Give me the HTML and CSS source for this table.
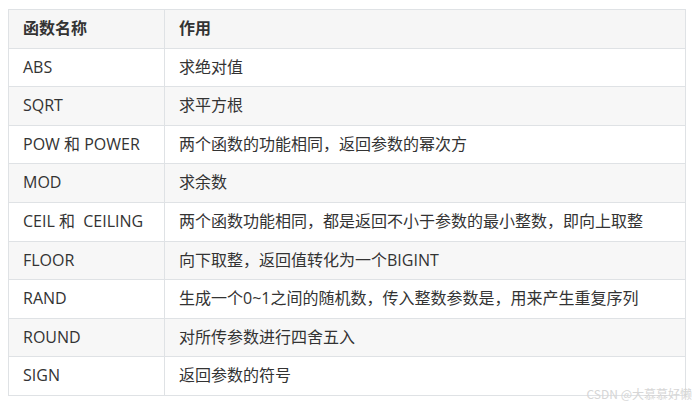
FILE: index.html
```html
<!DOCTYPE html>
<html lang="zh">
<head>
<meta charset="utf-8">
<link rel="stylesheet" href="styles.css">
</head>
<body>
<div class="wrap">
<table class="fn-table">
  <thead>
    <tr><th class="c1">函数名称</th><th>作用</th></tr>
  </thead>
  <tbody>
    <tr><td>ABS</td><td>求绝对值</td></tr>
    <tr><td>SQRT</td><td>求平方根</td></tr>
    <tr><td>POW 和 POWER</td><td>两个函数的功能相同，返回参数的幂次方</td></tr>
    <tr><td>MOD</td><td>求余数</td></tr>
    <tr><td>CEIL 和&nbsp; CEILING</td><td>两个函数功能相同，都是返回不小于参数的最小整数，即向上取整</td></tr>
    <tr><td>FLOOR</td><td>向下取整，返回值转化为一个BIGINT</td></tr>
    <tr><td>RAND</td><td>生成一个0~1之间的随机数，传入整数参数是，用来产生重复序列</td></tr>
    <tr><td>ROUND</td><td>对所传参数进行四舍五入</td></tr>
    <tr><td>SIGN</td><td>返回参数的符号</td></tr>
  </tbody>
</table>
<div class="watermark">CSDN @大慕慕好懒</div>
</div>
</body>
</html>
```

FILE: styles.css
```css
html, body {
  margin: 0;
  padding: 0;
  background: #ffffff;
}
body {
  width: 698px;
  height: 404px;
  overflow: hidden;
}
.wrap {
  position: relative;
  width: 698px;
  height: 404px;
  padding: 9px 0 0 8px;
  box-sizing: border-box;
}
.fn-table {
  border-collapse: collapse;
  width: 678px;
  font-family: "Open Sans", "Noto Sans CJK SC", sans-serif;
  font-size: 16px;
  color: #333333;
  table-layout: fixed;
}
.fn-table th,
.fn-table td {
  border: 1px solid #dfe2e5;
  padding: 8px 14px;
  line-height: 21.6px;
  text-align: left;
  white-space: nowrap;
}
.fn-table th {
  font-weight: 700;
  background: #f6f6f6;
}
.fn-table .c1 {
  width: 127px;
}
.fn-table tbody tr:nth-child(even) td {
  background: #f7f7f7;
}
.watermark {
  position: absolute;
  right: 6px;
  bottom: 3px;
  font-family: "Noto Sans CJK SC", sans-serif;
  font-size: 12px;
  line-height: 14px;
  color: #d6d6d6;
}
```
